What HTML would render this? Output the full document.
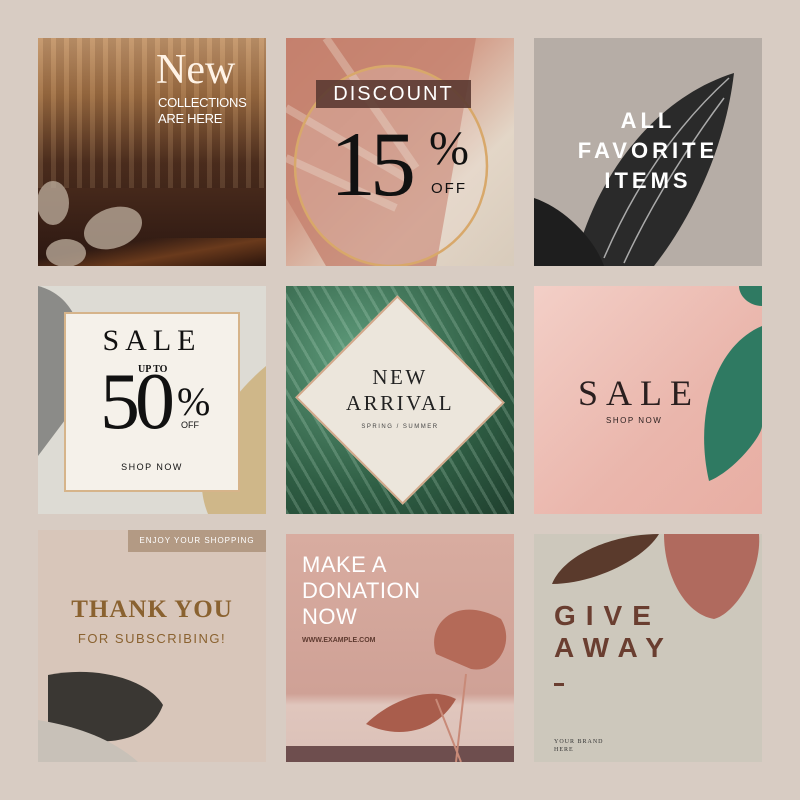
<!DOCTYPE html>
<html><head><meta charset="utf-8"><style>
*{margin:0;padding:0;box-sizing:border-box}
body{width:800px;height:800px;background:#d8ccc3;position:relative;overflow:hidden;font-family:"Liberation Sans",sans-serif}
.t{position:absolute;width:228px;height:228px;overflow:hidden}
.ab{position:absolute}
.serif{font-family:"Liberation Serif",serif}
svg{position:absolute;left:0;top:0}
</style></head><body>

<div class="t" style="left:38px;top:38px;background:linear-gradient(180deg,#c0936a 0%,#9a6a40 25%,#4e2e1e 55%,#2b1711 100%)">
 <div class="ab" style="left:0;top:0;width:228px;height:150px;background:repeating-linear-gradient(90deg,rgba(255,220,170,.12) 0 5px,rgba(0,0,0,.06) 5px 13px)"></div>
 <div class="ab" style="left:0;top:200px;width:228px;height:28px;background:linear-gradient(170deg,transparent 30%,#6a3a1c 60%,#2a140c)"></div>
 <svg width="228" height="228"><g fill="#b8a898" opacity=".8"><ellipse cx="75" cy="190" rx="30" ry="20" transform="rotate(-20 75 190)"/><ellipse cx="28" cy="215" rx="20" ry="14"/><ellipse cx="15" cy="165" rx="16" ry="22"/></g></svg>
 <div class="ab serif" style="left:118px;top:10px;color:#fff3e6;font-size:42px;line-height:44px">New</div>
 <div class="ab" style="left:120px;top:57px;color:#fff;font-size:13px;line-height:16px;letter-spacing:-.3px">COLLECTIONS<br>ARE HERE</div>
</div>

<div class="t" style="left:286px;top:38px;background:linear-gradient(135deg,#c07a66 0%,#d29a86 40%,#e3d6c7 70%,#d8cbbb 100%)">
 <svg width="228" height="228"><path d="M0 0 L190 0 L150 228 L40 228 L0 160Z" fill="#c5826f" opacity=".8"/><path d="M0 70 L120 140 M0 120 L110 170 M40 0 L130 130" stroke="#ead7c8" stroke-width="8" opacity=".4"/><ellipse cx="105" cy="128" rx="96" ry="100" fill="rgba(240,225,215,.25)" stroke="#d8a86a" stroke-width="2.5"/></svg>
 <div class="ab" style="left:30px;top:42px;width:155px;height:28px;background:#5b3a32;opacity:.9"></div>
 <div class="ab" style="left:30px;top:42px;width:155px;height:28px;color:#fff;font-size:20px;line-height:28px;text-align:center;letter-spacing:2px">DISCOUNT</div>
 <div class="ab serif" style="left:44px;top:76px;color:#111;font-size:92px;line-height:100px;letter-spacing:-6px">15</div>
 <div class="ab serif" style="left:143px;top:86px;color:#111;font-size:48px;line-height:50px">%</div>
 <div class="ab" style="left:145px;top:142px;color:#111;font-size:15px;letter-spacing:2px">OFF</div>
</div>

<div class="t" style="left:534px;top:38px;background:#b6ada6">
 <svg width="228" height="228"><path d="M40 228 C60 140 120 60 200 35 C190 120 150 190 120 228Z" fill="#2a2a2a"/><path d="M0 160 C30 170 60 200 70 228 L0 228Z" fill="#1e1e1e"/><path d="M70 220 C100 150 140 90 195 40 M90 225 C120 160 160 100 190 60" stroke="#aaa" stroke-width="1.5" fill="none"/></svg>
 <div class="ab" style="left:0;top:68px;width:228px;text-align:center;color:#fff;font-size:22px;line-height:30px;letter-spacing:4px;font-weight:bold">ALL<br>FAVORITE<br>ITEMS</div>
</div>

<div class="t" style="left:38px;top:286px;background:#dddbd4">
 <svg width="228" height="228"><path d="M0 0 C40 10 60 60 30 130 L0 170Z" fill="#555" opacity=".6"/><path d="M228 80 C180 120 150 180 170 228 L228 228Z" fill="#c9a86a" opacity=".7"/></svg>
 <div class="ab" style="left:26px;top:26px;width:176px;height:180px;background:#f5f1ea;border:2px solid #d6b48a"></div>
 <div class="ab serif" style="left:26px;top:38px;width:176px;text-align:center;font-size:30px;letter-spacing:6px;color:#111">SALE</div>
 <div class="ab serif" style="left:62px;top:76px;font-size:80px;line-height:80px;color:#111;letter-spacing:-5px">50</div>
 <div class="ab serif" style="left:100px;top:78px;font-size:10px;font-weight:bold;color:#111">UP TO</div>
 <div class="ab serif" style="left:139px;top:92px;font-size:40px;color:#111">%</div>
 <div class="ab" style="left:143px;top:134px;font-size:9px;color:#111">OFF</div>
 <div class="ab" style="left:26px;top:176px;width:176px;text-align:center;font-size:9px;letter-spacing:1.5px;color:#111">SHOP NOW</div>
</div>

<div class="t" style="left:286px;top:286px;background:radial-gradient(circle at 30% 30%,#5e9a7a,#2f5e44 60%,#1f3f2e)">
 <div class="ab" style="left:0;top:0;width:228px;height:228px;background:repeating-linear-gradient(60deg,rgba(210,240,220,.2) 0 3px,transparent 3px 12px)"></div>
 <div class="ab" style="left:38px;top:38px;width:152px;height:152px;background:#ece6dc;border:2px solid #d2a88a;transform:rotate(45deg) scaleY(.95)"></div>
 <div class="ab serif" style="left:0;top:78px;width:228px;text-align:center;font-size:21px;line-height:26px;letter-spacing:2.5px;color:#222">NEW<br>ARRIVAL</div>
 <div class="ab" style="left:0;top:138px;width:228px;text-align:center;font-size:6px;letter-spacing:1.5px;color:#444">SPRING / SUMMER</div>
</div>

<div class="t" style="left:534px;top:286px;background:linear-gradient(135deg,#f3cfc7,#eab6ac 60%,#e8aea3)">
 <svg width="228" height="228"><path d="M228 40 C180 60 160 130 175 195 C200 185 228 150 228 140Z" fill="#2f7a62"/><path d="M205 0 L228 0 L228 20 C215 20 205 10 205 0Z" fill="#2f7a62"/></svg>
 <div class="ab serif" style="left:44px;top:86px;font-size:36px;letter-spacing:8px;color:#2a1f1f">SALE</div>
 <div class="ab" style="left:72px;top:130px;font-size:8px;letter-spacing:1.5px;color:#2a1f1f">SHOP NOW</div>
</div>

<div class="t" style="left:38px;top:530px;height:232px;background:#d8c6ba">
 <div class="ab" style="left:90px;top:0;width:138px;height:22px;background:#b39a84;color:#fff;font-size:8px;line-height:22px;text-align:center;letter-spacing:1px">ENJOY YOUR SHOPPING</div>
 <svg width="228" height="232"><path d="M10 145 C60 135 110 150 125 175 C110 215 60 220 10 200Z" fill="#3a3733"/><path d="M0 190 L0 232 L100 232 C70 205 30 195 0 190Z" fill="#c8c1b8"/></svg>
 <div class="ab serif" style="left:0;top:66px;width:228px;text-align:center;font-size:25px;font-weight:bold;letter-spacing:1px;color:#8a6230">THANK YOU</div>
 <div class="ab" style="left:0;top:101px;width:228px;text-align:center;font-size:13px;letter-spacing:1.5px;color:#8a6230">FOR SUBSCRIBING!</div>
</div>

<div class="t" style="left:286px;top:534px;background:linear-gradient(180deg,#d8aca0 0%,#cfa196 70%,#e0c6bd 75%,#dcc2b9 93%,#6e4e4e 93%)">
 <svg width="228" height="228"><path d="M150 120 C140 90 170 60 215 85 C230 110 210 140 185 135Z" fill="#b46a58"/><path d="M80 190 C100 170 140 150 170 165 C150 200 110 205 80 190Z" fill="#a95d4c"/><path d="M180 140 L170 228 M150 165 L175 228" stroke="#c88a78" stroke-width="2"/></svg>
 <div class="ab" style="left:16px;top:18px;color:#fff;font-size:22px;line-height:26px;letter-spacing:.5px">MAKE A<br>DONATION<br>NOW</div>
 <div class="ab" style="left:16px;top:103px;color:#5e3a30;font-size:7px;font-weight:bold">WWW.EXAMPLE.COM</div>
</div>

<div class="t" style="left:534px;top:534px;background:#cdc8bc">
 <svg width="228" height="228"><path d="M18 50 C30 20 80 0 125 0 C110 25 60 50 18 50Z" fill="#5a3a2c"/><path d="M130 0 L225 0 C228 40 200 80 180 85 C150 80 130 40 130 0Z" fill="#b06a5e"/></svg>
 <div class="ab" style="left:20px;top:66px;font-size:28px;line-height:32px;font-weight:bold;letter-spacing:10px;color:#6a3e30">GIVE<br>AWAY</div>
 <div class="ab" style="left:20px;top:149px;width:10px;height:3px;background:#6a3e30"></div>
 <div class="ab serif" style="left:20px;top:204px;font-size:6px;letter-spacing:1px;line-height:8px;color:#333">YOUR BRAND<br>HERE</div>
</div>
</body></html>
